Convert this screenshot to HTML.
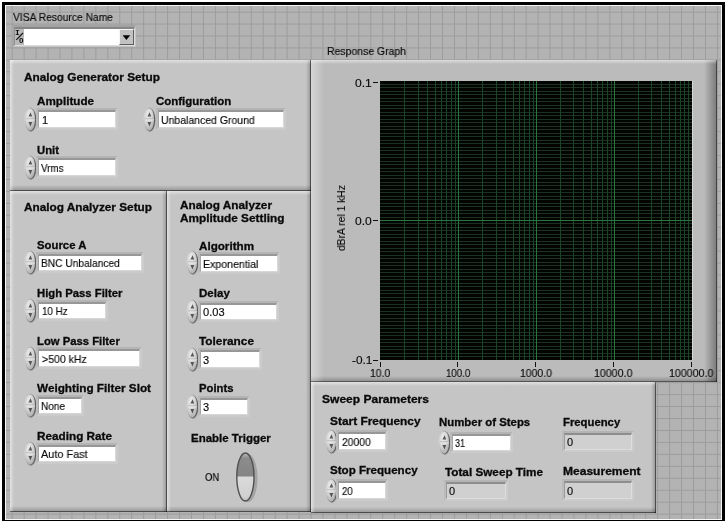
<!DOCTYPE html><html><head><meta charset="utf-8"><title>Front Panel</title><style>
html,body{margin:0;padding:0;background:#fff}
body{width:725px;height:521px;overflow:hidden;position:relative;font-family:"Liberation Sans",sans-serif;font-size:11px;line-height:13px;color:#0a0a0a}
#frame{position:absolute;left:2px;top:2px;width:723px;height:519px;background:#000}
#wl{position:absolute;left:5px;top:5px;width:717px;height:514.7px;background:#f6f6f6}
#bgd{position:absolute;left:5.7px;top:6.1px;width:715.1px;height:512.8px;background-color:#b3b3b3;
 background-image:linear-gradient(to right,#9c9c9c 0,#9c9c9c 1px,transparent 1px),linear-gradient(to bottom,#9c9c9c 0,#9c9c9c 1px,transparent 1px);
 background-size:11.962px 11.962px;background-position:5.70px 5.60px}
.abs{position:absolute;display:block}
.panel{position:absolute;box-sizing:border-box;
 background-image:
  linear-gradient(rgba(0,0,0,.5),rgba(0,0,0,.5)),
  linear-gradient(rgba(0,0,0,.5),rgba(0,0,0,.5)),
  linear-gradient(to bottom,rgba(255,255,255,.5),rgba(255,255,255,0) 100%),
  linear-gradient(to right,rgba(255,255,255,.5),rgba(255,255,255,0) 100%),
  linear-gradient(to top,rgba(0,0,0,.26),rgba(0,0,0,0) 100%),
  linear-gradient(to left,rgba(0,0,0,.26),rgba(0,0,0,0) 100%);
 background-size:100% 1px,1px 100%,100% 4px,4px 100%,100% 6px,5px 100%;
 background-position:0 100%,100% 0,0 0,0 0,0 100%,100% 0;
 background-repeat:no-repeat}
.panel.gp{
 background-image:
  linear-gradient(rgba(0,0,0,.4),rgba(0,0,0,.4)),
  linear-gradient(rgba(0,0,0,.45),rgba(0,0,0,.45)),
  linear-gradient(to bottom,rgba(255,255,255,.5),rgba(255,255,255,0) 100%),
  linear-gradient(to right,rgba(255,255,255,.38),rgba(255,255,255,0) 100%),
  linear-gradient(to top,rgba(0,0,0,.28),rgba(0,0,0,0) 100%),
  linear-gradient(to left,rgba(0,0,0,.36),rgba(0,0,0,0) 100%);
 background-size:100% 1px,1px 100%,100% 4px,13px 100%,100% 6px,13px 100%}
.t{will-change:transform;position:absolute;white-space:nowrap;transform-origin:0 50%;display:block;line-height:13px;height:13px}
.t{-webkit-text-stroke:0.15px #0a0a0a}
.t.b{font-weight:bold;-webkit-text-stroke:0.3px #0a0a0a}
.t.yl{transform-origin:0 100%;height:13px;margin-top:-13px}
.fld{position:absolute;border-style:solid;border-width:2px 2px 2px 2px;border-color:#b4b4b4 #cccccc #cbcbcb #bbbbbb}
.fld i{display:block;background:#fff;border-style:solid;border-width:2px 1px 1px 1px;border-color:#979797 #d8d8d8 #d6d6d6 #a6a6a6}
.fld.ind i{background:#d0d0d0;border-color:#8e8e8e #dedede #dcdcdc #9c9c9c}
.visa{position:absolute;border-style:solid;border-width:2px 1.5px 1.5px 2px;border-color:#a2a2a2 #c4c4c4 #c4c4c4 #a6a6a6}
.vi{display:flex;height:16.2px;border-style:solid;border-width:2px 1.5px 1.5px 1.5px;border-color:#868686 #dedede #dcdcdc #929292}
.vi i{display:block;height:16.2px;box-sizing:border-box}
.vi i.g{background:#b9b9b9}
.vi i.w{background:#fff}
.vi i.btn{background:#c2c2c2;border:1px solid;border-color:#f6f6f6 #5e5e5e #5e5e5e #f6f6f6}
.io{will-change:transform;position:absolute;font-size:8px;line-height:9px;font-weight:bold;color:#0c0c0c}
.io.m{font-family:"Liberation Mono",monospace}
</style></head><body><div id="frame"></div><div id="wl"></div><div id="bgd"></div><svg width="0" height="0" style="position:absolute"><defs><radialGradient id="sp" cx="0.38" cy="0.3" r="0.75"><stop offset="0" stop-color="#ececec"/><stop offset="0.55" stop-color="#d2d2d2"/><stop offset="1" stop-color="#a6a6a6"/></radialGradient><linearGradient id="sps" x1="0" y1="0" x2="1" y2="0.35"><stop offset="0" stop-color="#e6e6e6"/><stop offset="0.5" stop-color="#a0a0a0"/><stop offset="1" stop-color="#505050"/></linearGradient><linearGradient id="tg1" x1="0" y1="0" x2="0" y2="1"><stop offset="0" stop-color="#c8c8c8"/><stop offset="0.25" stop-color="#8c8c8c"/><stop offset="1" stop-color="#848484"/></linearGradient><linearGradient id="tg2" x1="0" y1="0" x2="0" y2="1"><stop offset="0" stop-color="#dadada"/><stop offset="0.8" stop-color="#d0d0d0"/><stop offset="1" stop-color="#a8a8a8"/></linearGradient></defs></svg><div class="panel" style="left:10px;top:60px;width:300.8px;height:130.6px;background-color:#c5c5c5;"></div>
<div class="panel" style="left:10px;top:190.6px;width:156.9px;height:321.8px;background-color:#c5c5c5;"></div>
<div class="panel" style="left:166.9px;top:190.6px;width:143.9px;height:321.8px;background-color:#c5c5c5;"></div>
<div class="panel gp" style="left:310.8px;top:60px;width:406.4px;height:321.8px;background-color:#bbbbbb;"></div>
<div class="panel" style="left:310.8px;top:381.8px;width:345.5px;height:130.8px;background-color:#c5c5c5;"></div>
<div class="visa" style="left:11.5px;top:24.5px"><div class="vi"><i class="g" style="width:9.8px"></i><i class="w" style="width:94.8px"></i><i class="btn" style="width:14.8px"></i></div></div><svg class="abs" style="left:122px;top:34.5px" width="9" height="6" viewBox="0 0 9 6"><path d="M0.6 0.3 L8.2 0.3 L4.4 4.9Z" fill="#050505"/></svg>
<span class="io m" style="left:15.1px;top:28.2px">I</span><span class="io" style="left:18.9px;top:36.4px">0</span><svg class="abs" style="left:15px;top:28px" width="10" height="17" viewBox="15 28 10 17"><line x1="16.3" y1="39.8" x2="23" y2="33" stroke="#111" stroke-width="1.1"/></svg>
<svg class="abs" style="left:24px;top:106.5px" width="14.6" height="26" viewBox="-1 -1 14.6 26"><ellipse cx="6.2" cy="12.2" rx="5.3" ry="11.5" fill="#6e6e6e" opacity="0.6"/><ellipse cx="5.3" cy="11.5" rx="5.3" ry="11.5" fill="url(#sp)" stroke="url(#sps)" stroke-width="0.9"/><line x1="1" y1="11.0" x2="9.6" y2="11.0" stroke="#a0a0a0" stroke-width="0.8"/><line x1="1" y1="11.9" x2="9.6" y2="11.9" stroke="#f2f2f2" stroke-width="0.8"/><path d="M3.4 8.6 L7.199999999999999 8.6 L5.6 4.3Z M3.4 14.1 L7.199999999999999 14.1 L5.5 18.5Z" fill="#3e3e3e" opacity="0.85"/></svg>
<div class="fld" style="left:36px;top:108px"><i style="width:76px;height:15px"></i></div>
<svg class="abs" style="left:143px;top:106.5px" width="14.6" height="26" viewBox="-1 -1 14.6 26"><ellipse cx="6.2" cy="12.2" rx="5.3" ry="11.5" fill="#6e6e6e" opacity="0.6"/><ellipse cx="5.3" cy="11.5" rx="5.3" ry="11.5" fill="url(#sp)" stroke="url(#sps)" stroke-width="0.9"/><line x1="1" y1="11.0" x2="9.6" y2="11.0" stroke="#a0a0a0" stroke-width="0.8"/><line x1="1" y1="11.9" x2="9.6" y2="11.9" stroke="#f2f2f2" stroke-width="0.8"/><path d="M3.4 8.6 L7.199999999999999 8.6 L5.6 4.3Z M3.4 14.1 L7.199999999999999 14.1 L5.5 18.5Z" fill="#3e3e3e" opacity="0.85"/></svg>
<div class="fld" style="left:156px;top:108px"><i style="width:124px;height:15px"></i></div>
<svg class="abs" style="left:24px;top:154.5px" width="14.6" height="26" viewBox="-1 -1 14.6 26"><ellipse cx="6.2" cy="12.2" rx="5.3" ry="11.5" fill="#6e6e6e" opacity="0.6"/><ellipse cx="5.3" cy="11.5" rx="5.3" ry="11.5" fill="url(#sp)" stroke="url(#sps)" stroke-width="0.9"/><line x1="1" y1="11.0" x2="9.6" y2="11.0" stroke="#a0a0a0" stroke-width="0.8"/><line x1="1" y1="11.9" x2="9.6" y2="11.9" stroke="#f2f2f2" stroke-width="0.8"/><path d="M3.4 8.6 L7.199999999999999 8.6 L5.6 4.3Z M3.4 14.1 L7.199999999999999 14.1 L5.5 18.5Z" fill="#3e3e3e" opacity="0.85"/></svg>
<div class="fld" style="left:36px;top:156px"><i style="width:76px;height:15px"></i></div>
<svg class="abs" style="left:24px;top:249.5px" width="14.6" height="26" viewBox="-1 -1 14.6 26"><ellipse cx="6.2" cy="12.2" rx="5.3" ry="11.5" fill="#6e6e6e" opacity="0.6"/><ellipse cx="5.3" cy="11.5" rx="5.3" ry="11.5" fill="url(#sp)" stroke="url(#sps)" stroke-width="0.9"/><line x1="1" y1="11.0" x2="9.6" y2="11.0" stroke="#a0a0a0" stroke-width="0.8"/><line x1="1" y1="11.9" x2="9.6" y2="11.9" stroke="#f2f2f2" stroke-width="0.8"/><path d="M3.4 8.6 L7.199999999999999 8.6 L5.6 4.3Z M3.4 14.1 L7.199999999999999 14.1 L5.5 18.5Z" fill="#3e3e3e" opacity="0.85"/></svg>
<div class="fld" style="left:36px;top:251.5px"><i style="width:102px;height:14.5px"></i></div>
<svg class="abs" style="left:24px;top:298px" width="14.6" height="26" viewBox="-1 -1 14.6 26"><ellipse cx="6.2" cy="12.2" rx="5.3" ry="11.5" fill="#6e6e6e" opacity="0.6"/><ellipse cx="5.3" cy="11.5" rx="5.3" ry="11.5" fill="url(#sp)" stroke="url(#sps)" stroke-width="0.9"/><line x1="1" y1="11.0" x2="9.6" y2="11.0" stroke="#a0a0a0" stroke-width="0.8"/><line x1="1" y1="11.9" x2="9.6" y2="11.9" stroke="#f2f2f2" stroke-width="0.8"/><path d="M3.4 8.6 L7.199999999999999 8.6 L5.6 4.3Z M3.4 14.1 L7.199999999999999 14.1 L5.5 18.5Z" fill="#3e3e3e" opacity="0.85"/></svg>
<div class="fld" style="left:36px;top:299.5px"><i style="width:66px;height:14.5px"></i></div>
<svg class="abs" style="left:24px;top:345.5px" width="14.6" height="26" viewBox="-1 -1 14.6 26"><ellipse cx="6.2" cy="12.2" rx="5.3" ry="11.5" fill="#6e6e6e" opacity="0.6"/><ellipse cx="5.3" cy="11.5" rx="5.3" ry="11.5" fill="url(#sp)" stroke="url(#sps)" stroke-width="0.9"/><line x1="1" y1="11.0" x2="9.6" y2="11.0" stroke="#a0a0a0" stroke-width="0.8"/><line x1="1" y1="11.9" x2="9.6" y2="11.9" stroke="#f2f2f2" stroke-width="0.8"/><path d="M3.4 8.6 L7.199999999999999 8.6 L5.6 4.3Z M3.4 14.1 L7.199999999999999 14.1 L5.5 18.5Z" fill="#3e3e3e" opacity="0.85"/></svg>
<div class="fld" style="left:36px;top:347px"><i style="width:100px;height:15px"></i></div>
<svg class="abs" style="left:24px;top:393px" width="14.6" height="26" viewBox="-1 -1 14.6 26"><ellipse cx="6.2" cy="12.2" rx="5.3" ry="11.5" fill="#6e6e6e" opacity="0.6"/><ellipse cx="5.3" cy="11.5" rx="5.3" ry="11.5" fill="url(#sp)" stroke="url(#sps)" stroke-width="0.9"/><line x1="1" y1="11.0" x2="9.6" y2="11.0" stroke="#a0a0a0" stroke-width="0.8"/><line x1="1" y1="11.9" x2="9.6" y2="11.9" stroke="#f2f2f2" stroke-width="0.8"/><path d="M3.4 8.6 L7.199999999999999 8.6 L5.6 4.3Z M3.4 14.1 L7.199999999999999 14.1 L5.5 18.5Z" fill="#3e3e3e" opacity="0.85"/></svg>
<div class="fld" style="left:36px;top:394.5px"><i style="width:42px;height:14.5px"></i></div>
<svg class="abs" style="left:24px;top:441px" width="14.6" height="26" viewBox="-1 -1 14.6 26"><ellipse cx="6.2" cy="12.2" rx="5.3" ry="11.5" fill="#6e6e6e" opacity="0.6"/><ellipse cx="5.3" cy="11.5" rx="5.3" ry="11.5" fill="url(#sp)" stroke="url(#sps)" stroke-width="0.9"/><line x1="1" y1="11.0" x2="9.6" y2="11.0" stroke="#a0a0a0" stroke-width="0.8"/><line x1="1" y1="11.9" x2="9.6" y2="11.9" stroke="#f2f2f2" stroke-width="0.8"/><path d="M3.4 8.6 L7.199999999999999 8.6 L5.6 4.3Z M3.4 14.1 L7.199999999999999 14.1 L5.5 18.5Z" fill="#3e3e3e" opacity="0.85"/></svg>
<div class="fld" style="left:36px;top:442.5px"><i style="width:76px;height:14.5px"></i></div>
<svg class="abs" style="left:186px;top:250px" width="14.6" height="26" viewBox="-1 -1 14.6 26"><ellipse cx="6.2" cy="12.2" rx="5.3" ry="11.5" fill="#6e6e6e" opacity="0.6"/><ellipse cx="5.3" cy="11.5" rx="5.3" ry="11.5" fill="url(#sp)" stroke="url(#sps)" stroke-width="0.9"/><line x1="1" y1="11.0" x2="9.6" y2="11.0" stroke="#a0a0a0" stroke-width="0.8"/><line x1="1" y1="11.9" x2="9.6" y2="11.9" stroke="#f2f2f2" stroke-width="0.8"/><path d="M3.4 8.6 L7.199999999999999 8.6 L5.6 4.3Z M3.4 14.1 L7.199999999999999 14.1 L5.5 18.5Z" fill="#3e3e3e" opacity="0.85"/></svg>
<div class="fld" style="left:198px;top:252px"><i style="width:76px;height:14.5px"></i></div>
<svg class="abs" style="left:186px;top:298.5px" width="14.6" height="26" viewBox="-1 -1 14.6 26"><ellipse cx="6.2" cy="12.2" rx="5.3" ry="11.5" fill="#6e6e6e" opacity="0.6"/><ellipse cx="5.3" cy="11.5" rx="5.3" ry="11.5" fill="url(#sp)" stroke="url(#sps)" stroke-width="0.9"/><line x1="1" y1="11.0" x2="9.6" y2="11.0" stroke="#a0a0a0" stroke-width="0.8"/><line x1="1" y1="11.9" x2="9.6" y2="11.9" stroke="#f2f2f2" stroke-width="0.8"/><path d="M3.4 8.6 L7.199999999999999 8.6 L5.6 4.3Z M3.4 14.1 L7.199999999999999 14.1 L5.5 18.5Z" fill="#3e3e3e" opacity="0.85"/></svg>
<div class="fld" style="left:198px;top:300.5px"><i style="width:75px;height:14.5px"></i></div>
<svg class="abs" style="left:186px;top:346.5px" width="14.6" height="26" viewBox="-1 -1 14.6 26"><ellipse cx="6.2" cy="12.2" rx="5.3" ry="11.5" fill="#6e6e6e" opacity="0.6"/><ellipse cx="5.3" cy="11.5" rx="5.3" ry="11.5" fill="url(#sp)" stroke="url(#sps)" stroke-width="0.9"/><line x1="1" y1="11.0" x2="9.6" y2="11.0" stroke="#a0a0a0" stroke-width="0.8"/><line x1="1" y1="11.9" x2="9.6" y2="11.9" stroke="#f2f2f2" stroke-width="0.8"/><path d="M3.4 8.6 L7.199999999999999 8.6 L5.6 4.3Z M3.4 14.1 L7.199999999999999 14.1 L5.5 18.5Z" fill="#3e3e3e" opacity="0.85"/></svg>
<div class="fld" style="left:198px;top:348px"><i style="width:58px;height:14.5px"></i></div>
<svg class="abs" style="left:186px;top:393.5px" width="14.6" height="26" viewBox="-1 -1 14.6 26"><ellipse cx="6.2" cy="12.2" rx="5.3" ry="11.5" fill="#6e6e6e" opacity="0.6"/><ellipse cx="5.3" cy="11.5" rx="5.3" ry="11.5" fill="url(#sp)" stroke="url(#sps)" stroke-width="0.9"/><line x1="1" y1="11.0" x2="9.6" y2="11.0" stroke="#a0a0a0" stroke-width="0.8"/><line x1="1" y1="11.9" x2="9.6" y2="11.9" stroke="#f2f2f2" stroke-width="0.8"/><path d="M3.4 8.6 L7.199999999999999 8.6 L5.6 4.3Z M3.4 14.1 L7.199999999999999 14.1 L5.5 18.5Z" fill="#3e3e3e" opacity="0.85"/></svg>
<div class="fld" style="left:198px;top:395.5px"><i style="width:46px;height:14.0px"></i></div>
<svg class="abs" style="left:233px;top:450px" width="30" height="56" viewBox="233 450 30 56"><ellipse cx="248" cy="478" rx="9.5" ry="24" fill="#8c8c8c" opacity="0.6"/><clipPath id="tc"><ellipse cx="245.4" cy="477" rx="8.6" ry="24"/></clipPath><g clip-path="url(#tc)"><rect x="236" y="452" width="20" height="24.6" fill="url(#tg1)"/><rect x="236" y="476.6" width="20" height="26" fill="url(#tg2)"/></g><ellipse cx="245.4" cy="477" rx="8.6" ry="24" fill="none" stroke="#505050" stroke-width="1.4"/></svg>
<svg class="abs" style="left:380px;top:81px" width="312" height="279" viewBox="380 81 312 279" shape-rendering="crispEdges"><rect x="380" y="81" width="312" height="279" fill="#020402"/><path d="M380 84.5H692M380 87.5H692M380 91.5H692M380 94.5H692M380 98.5H692M380 101.5H692M380 105.5H692M380 108.5H692M380 112.5H692M380 115.5H692M380 119.5H692M380 122.5H692M380 126.5H692M380 129.5H692M380 133.5H692M380 136.5H692M380 140.5H692M380 143.5H692M380 147.5H692M380 150.5H692M380 154.5H692M380 157.5H692M380 161.5H692M380 164.5H692M380 168.5H692M380 171.5H692M380 175.5H692M380 178.5H692M380 182.5H692M380 185.5H692M380 189.5H692M380 192.5H692M380 196.5H692M380 199.5H692M380 203.5H692M380 206.5H692M380 210.5H692M380 213.5H692M380 217.5H692M380 223.5H692M380 227.5H692M380 230.5H692M380 234.5H692M380 237.5H692M380 241.5H692M380 244.5H692M380 248.5H692M380 251.5H692M380 255.5H692M380 258.5H692M380 262.5H692M380 265.5H692M380 269.5H692M380 272.5H692M380 276.5H692M380 279.5H692M380 283.5H692M380 286.5H692M380 290.5H692M380 293.5H692M380 297.5H692M380 300.5H692M380 304.5H692M380 307.5H692M380 311.5H692M380 314.5H692M380 318.5H692M380 321.5H692M380 325.5H692M380 328.5H692M380 332.5H692M380 335.5H692M380 339.5H692M380 342.5H692M380 346.5H692M380 349.5H692M380 353.5H692M380 356.5H692" stroke="#1c3123" stroke-width="1" fill="none"/><path d="M404.5 81V360M418.5 81V360M427.5 81V360M435.5 81V360M441.5 81V360M446.5 81V360M451.5 81V360M455.5 81V360M482.5 81V360M496.5 81V360M505.5 81V360M513.5 81V360M519.5 81V360M524.5 81V360M529.5 81V360M533.5 81V360M560.5 81V360M573.5 81V360M583.5 81V360M591.5 81V360M597.5 81V360M602.5 81V360M607.5 81V360M611.5 81V360M638.5 81V360M651.5 81V360M661.5 81V360M669.5 81V360M675.5 81V360M680.5 81V360M684.5 81V360M688.5 81V360" stroke="#184626" stroke-width="1" fill="none"/><path d="M458.5 81V360M536.5 81V360M614.5 81V360M380 220.5H692" stroke="#28763c" stroke-width="1" fill="none"/></svg>
<div class="abs" style="left:692px;top:81px;width:1px;height:279px;background:#d8d8d8"></div>
<div class="abs" style="left:373px;top:81.5px;width:5px;height:1px;background:#111"></div>
<div class="abs" style="left:373px;top:220.0px;width:5px;height:1px;background:#111"></div>
<div class="abs" style="left:373px;top:359.5px;width:5px;height:1px;background:#111"></div>
<div class="abs" style="left:379.5px;top:361.5px;width:1px;height:5px;background:#111"></div>
<div class="abs" style="left:457.4px;top:361.5px;width:1px;height:5px;background:#111"></div>
<div class="abs" style="left:535.2px;top:361.5px;width:1px;height:5px;background:#111"></div>
<div class="abs" style="left:613.1px;top:361.5px;width:1px;height:5px;background:#111"></div>
<div class="abs" style="left:691.0px;top:361.5px;width:1px;height:5px;background:#111"></div>
<svg class="abs" style="left:324.5px;top:428.5px" width="14.6" height="26" viewBox="-1 -1 14.6 26"><ellipse cx="6.2" cy="12.2" rx="5.3" ry="11.5" fill="#6e6e6e" opacity="0.6"/><ellipse cx="5.3" cy="11.5" rx="5.3" ry="11.5" fill="url(#sp)" stroke="url(#sps)" stroke-width="0.9"/><line x1="1" y1="11.0" x2="9.6" y2="11.0" stroke="#a0a0a0" stroke-width="0.8"/><line x1="1" y1="11.9" x2="9.6" y2="11.9" stroke="#f2f2f2" stroke-width="0.8"/><path d="M3.4 8.6 L7.199999999999999 8.6 L5.6 4.3Z M3.4 14.1 L7.199999999999999 14.1 L5.5 18.5Z" fill="#3e3e3e" opacity="0.85"/></svg>
<div class="fld" style="left:336px;top:430px"><i style="width:46px;height:14.5px"></i></div>
<svg class="abs" style="left:324.5px;top:477.5px" width="14.6" height="26" viewBox="-1 -1 14.6 26"><ellipse cx="6.2" cy="12.2" rx="5.3" ry="11.5" fill="#6e6e6e" opacity="0.6"/><ellipse cx="5.3" cy="11.5" rx="5.3" ry="11.5" fill="url(#sp)" stroke="url(#sps)" stroke-width="0.9"/><line x1="1" y1="11.0" x2="9.6" y2="11.0" stroke="#a0a0a0" stroke-width="0.8"/><line x1="1" y1="11.9" x2="9.6" y2="11.9" stroke="#f2f2f2" stroke-width="0.8"/><path d="M3.4 8.6 L7.199999999999999 8.6 L5.6 4.3Z M3.4 14.1 L7.199999999999999 14.1 L5.5 18.5Z" fill="#3e3e3e" opacity="0.85"/></svg>
<div class="fld" style="left:336px;top:479px"><i style="width:46px;height:14.5px"></i></div>
<svg class="abs" style="left:438px;top:429.5px" width="14.6" height="26" viewBox="-1 -1 14.6 26"><ellipse cx="6.2" cy="12.2" rx="5.3" ry="11.5" fill="#6e6e6e" opacity="0.6"/><ellipse cx="5.3" cy="11.5" rx="5.3" ry="11.5" fill="url(#sp)" stroke="url(#sps)" stroke-width="0.9"/><line x1="1" y1="11.0" x2="9.6" y2="11.0" stroke="#a0a0a0" stroke-width="0.8"/><line x1="1" y1="11.9" x2="9.6" y2="11.9" stroke="#f2f2f2" stroke-width="0.8"/><path d="M3.4 8.6 L7.199999999999999 8.6 L5.6 4.3Z M3.4 14.1 L7.199999999999999 14.1 L5.5 18.5Z" fill="#3e3e3e" opacity="0.85"/></svg>
<div class="fld" style="left:450px;top:431.5px"><i style="width:57px;height:14.0px"></i></div>
<div class="fld ind" style="left:443.5px;top:479.5px"><i style="width:58.5px;height:14.5px"></i></div>
<div class="fld ind" style="left:561.5px;top:430.5px"><i style="width:66.5px;height:14.5px"></i></div>
<div class="fld ind" style="left:561.5px;top:479px"><i style="width:66.5px;height:15px"></i></div>
<span class="t" style="left:13.0px;top:10.89px;transform:scaleX(0.9346);">VISA Resource Name</span>
<span class="t b" style="left:24.4px;top:70.89px;transform:scaleX(1.0748);">Analog Generator Setup</span>
<span class="t b" style="left:36.6px;top:94.89px;transform:scaleX(1.0598);">Amplitude</span>
<span class="t" style="left:42.0px;top:114.29px;transform:scaleX(1.0000);">1</span>
<span class="t b" style="left:156.4px;top:95.09px;transform:scaleX(1.0429);">Configuration</span>
<span class="t" style="left:160.6px;top:114.29px;transform:scaleX(0.9526);">Unbalanced Ground</span>
<span class="t b" style="left:36.6px;top:144.29px;transform:scaleX(1.0285);">Unit</span>
<span class="t" style="left:41.0px;top:162.29px;transform:scaleX(0.8945);">Vrms</span>
<span class="t b" style="left:24.4px;top:200.89px;transform:scaleX(1.0721);">Analog Analyzer Setup</span>
<span class="t b" style="left:36.6px;top:238.89px;transform:scaleX(1.0315);">Source A</span>
<span class="t" style="left:40.6px;top:256.89px;transform:scaleX(0.9271);">BNC Unbalanced</span>
<span class="t b" style="left:36.6px;top:286.89px;transform:scaleX(1.0272);">High Pass Filter</span>
<span class="t" style="left:42.0px;top:304.89px;transform:scaleX(0.8904);">10 Hz</span>
<span class="t b" style="left:36.6px;top:334.89px;transform:scaleX(1.0260);">Low Pass Filter</span>
<span class="t" style="left:41.6px;top:352.89px;transform:scaleX(0.9576);">&gt;500 kHz</span>
<span class="t b" style="left:36.6px;top:381.89px;transform:scaleX(1.0681);">Weighting Filter Slot</span>
<span class="t" style="left:41.0px;top:399.89px;transform:scaleX(0.9127);">None</span>
<span class="t b" style="left:36.6px;top:429.89px;transform:scaleX(1.0669);">Reading Rate</span>
<span class="t" style="left:41.0px;top:448.29px;transform:scaleX(0.9898);">Auto Fast</span>
<span class="t b" style="left:180.0px;top:199.29px;transform:scaleX(1.0725);">Analog Analyzer</span>
<span class="t b" style="left:180.0px;top:211.89px;transform:scaleX(1.0744);">Amplitude Settling</span>
<span class="t b" style="left:198.6px;top:239.69px;transform:scaleX(1.0586);">Algorithm</span>
<span class="t" style="left:203.0px;top:257.69px;transform:scaleX(0.9635);">Exponential</span>
<span class="t b" style="left:198.6px;top:286.89px;transform:scaleX(1.0491);">Delay</span>
<span class="t" style="left:203.0px;top:305.89px;transform:scaleX(1.0083);">0.03</span>
<span class="t b" style="left:198.6px;top:334.89px;transform:scaleX(1.0751);">Tolerance</span>
<span class="t" style="left:203.0px;top:353.69px;transform:scaleX(1.0000);">3</span>
<span class="t b" style="left:198.6px;top:381.89px;transform:scaleX(1.0230);">Points</span>
<span class="t" style="left:203.0px;top:400.89px;transform:scaleX(1.0000);">3</span>
<span class="t b" style="left:190.6px;top:431.89px;transform:scaleX(1.0442);">Enable Trigger</span>
<span class="t" style="left:204.8px;top:470.99px;transform:scaleX(0.8606);">ON</span>
<span class="t" style="left:326.6px;top:45.29px;transform:scaleX(0.9498);">Response Graph</span>
<span class="t" style="left:354.7px;top:77.29px;transform:scaleX(1.0983);">0.1</span>
<span class="t" style="left:355.0px;top:214.89px;transform:scaleX(1.0983);">0.0</span>
<span class="t" style="left:351.6px;top:354.19px;transform:scaleX(1.0755);">-0.1</span>
<span class="t" style="left:370.0px;top:367.29px;transform:scaleX(0.9523);">10.0</span>
<span class="t" style="left:446.0px;top:367.29px;transform:scaleX(0.8790);">100.0</span>
<span class="t" style="left:520.4px;top:367.29px;transform:scaleX(0.9508);">1000.0</span>
<span class="t" style="left:594.0px;top:367.29px;transform:scaleX(0.9657);">10000.0</span>
<span class="t" style="left:668.6px;top:367.29px;transform:scaleX(0.9675);">100000.0</span>
<span class="t yl" style="left:347.6px;top:250.6px;transform:rotate(-90deg) scaleX(0.9387);">dBrA rel 1 kHz</span>
<span class="t b" style="left:322.0px;top:393.29px;transform:scaleX(1.0936);">Sweep Parameters</span>
<span class="t b" style="left:330.0px;top:414.79px;transform:scaleX(1.0818);">Start Frequency</span>
<span class="t" style="left:341.6px;top:435.89px;transform:scaleX(0.9414);">20000</span>
<span class="t b" style="left:330.0px;top:463.69px;transform:scaleX(1.0538);">Stop Frequency</span>
<span class="t" style="left:341.6px;top:484.89px;transform:scaleX(0.8816);">20</span>
<span class="t b" style="left:439.4px;top:415.69px;transform:scaleX(1.0362);">Number of Steps</span>
<span class="t" style="left:455.4px;top:436.89px;transform:scaleX(0.8327);">31</span>
<span class="t b" style="left:444.6px;top:465.89px;transform:scaleX(1.0663);">Total Sweep Time</span>
<span class="t" style="left:448.6px;top:485.29px;transform:scaleX(1.0000);">0</span>
<span class="t b" style="left:563.4px;top:415.89px;transform:scaleX(1.0280);">Frequency</span>
<span class="t" style="left:567.0px;top:436.29px;transform:scaleX(1.0000);">0</span>
<span class="t b" style="left:563.4px;top:464.69px;transform:scaleX(1.0942);">Measurement</span>
<span class="t" style="left:567.0px;top:485.29px;transform:scaleX(1.0000);">0</span></body></html>
